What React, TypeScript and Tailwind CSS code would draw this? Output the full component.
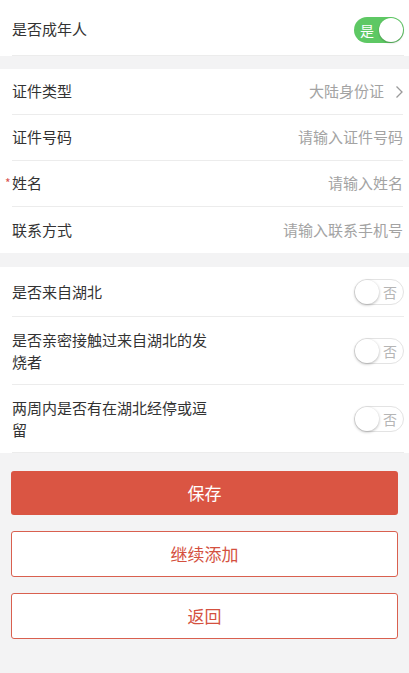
import React from "react";

const font = { fontFamily: '"Noto Sans CJK SC", "Noto Sans", sans-serif' };

const Switch = ({ on }: { on: boolean }) =>
  on ? (
    <div className="relative w-[50px] h-[26px] rounded-full bg-[#5ec864] shrink-0">
      <span className="absolute left-[6px] top-[2px] text-[14px] leading-[22px] text-white">是</span>
      <span className="absolute right-[1px] top-[1px] w-[24px] h-[24px] rounded-full bg-white shadow-[0_1px_2px_rgba(0,0,0,0.25)]" />
    </div>
  ) : (
    <div className="relative w-[50px] h-[26px] rounded-full bg-white border border-[#e3e3e3] shrink-0">
      <span className="absolute left-0 top-0 w-[24px] h-[24px] rounded-full bg-white shadow-[0_1px_3px_rgba(0,0,0,0.3)]" />
      <span className="absolute right-[6px] top-[1px] text-[14px] leading-[22px] text-[#b5b5b5]">否</span>
    </div>
  );

const InputRow = ({
  label,
  placeholder,
  required,
  last,
}: {
  label: string;
  placeholder: string;
  required?: boolean;
  last?: boolean;
}) => (
  <div className={`flex items-center justify-between h-[46px] ml-[12px] mr-[6px] ${last ? "" : "border-b border-[#ececec]"}`}>
    <div className="relative text-[15px] text-[#333]">
      {required && (
        <span className="absolute -left-[7px] top-[5px] text-[12px] leading-none text-[#d9534f]">*</span>
      )}
      {label}
    </div>
    <div className="text-[15px] text-[#a3a3a3]">{placeholder}</div>
  </div>
);

const SwitchRow = ({ label, tall }: { label: string; tall?: boolean }) => (
  <div
    className={`flex items-center justify-between ml-[12px] mr-[5px] border-b border-[#ececec] ${
      tall ? "h-[68px]" : "h-[50px]"
    }`}
  >
    <div className="text-[15px] leading-[22px] text-[#333] w-[200px]">{label}</div>
    <Switch on={false} />
  </div>
);

export default function App() {
  return (
    <div className="min-h-[673px] bg-[#f3f3f4]" style={font}>
      <div className="bg-white">
        <div className="flex items-center justify-between h-[56px] pt-[4px] ml-[12px] mr-[5px] border-b border-[#ececec]">
          <div className="text-[15px] text-[#333]">是否成年人</div>
          <Switch on />
        </div>
      </div>

      <div className="bg-white mt-[13px]">
        <div className="flex items-center justify-between h-[46px] ml-[12px] mr-[6px] border-b border-[#ececec]">
          <div className="text-[15px] text-[#333]">证件类型</div>
          <div className="flex items-center gap-[11px] text-[15px] text-[#a3a3a3]">
            大陆身份证
            <svg width="8" height="14" viewBox="0 0 8 14" fill="none">
              <path d="M1.5 1.5l5.5 5.5-5.5 5.5" stroke="#9a9a9a" strokeWidth="1.3" />
            </svg>
          </div>
        </div>
        <InputRow label="证件号码" placeholder="请输入证件号码" />
        <InputRow label="姓名" placeholder="请输入姓名" required />
        <InputRow label="联系方式" placeholder="请输入联系手机号" last />
      </div>

      <div className="bg-white mt-[14px]">
        <SwitchRow label="是否来自湖北" />
        <SwitchRow label="是否亲密接触过来自湖北的发烧者" tall />
        <SwitchRow label="两周内是否有在湖北经停或逗留" tall />
      </div>

      <div className="flex flex-col gap-[16px] px-[11px] pt-[18px]">
        <button className="h-[44px] rounded-[3px] bg-[#da5543] text-white text-[17px]">保存</button>
        <button className="h-[46px] rounded-[3px] border border-[#d9604f] bg-white text-[#d4513f] text-[17px]">
          继续添加
        </button>
        <button className="h-[46px] rounded-[3px] border border-[#d9604f] bg-white text-[#d4513f] text-[17px]">
          返回
        </button>
      </div>
    </div>
  );
}
